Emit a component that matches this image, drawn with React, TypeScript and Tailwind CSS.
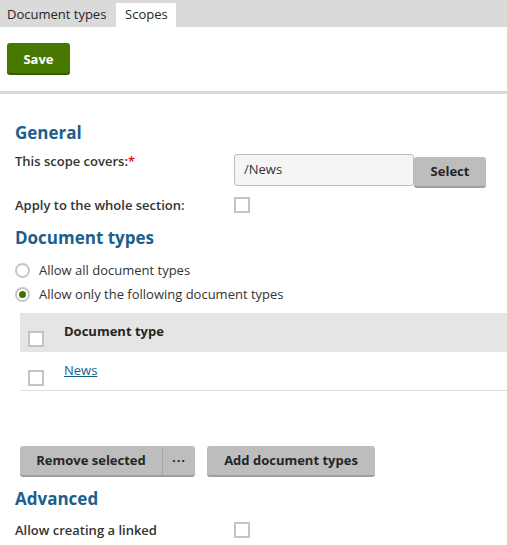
import React from 'react';

function Checkbox() {
  return <span className="block h-4 w-4 border-2 border-[#c4c4c4] bg-white" />;
}

function Radio({ checked }: { checked?: boolean }) {
  return (
    <span className="flex h-[15px] w-[15px] items-center justify-center rounded-full border-2 border-[#c6c6c6] bg-white">
      {checked && <span className="block h-[7px] w-[7px] rounded-full bg-[#3f7400]" />}
    </span>
  );
}

function GrayButton({ children, className = '' }: { children: React.ReactNode; className?: string }) {
  return (
    <button
      type="button"
      className={`h-[31px] rounded-[3px] border-b-2 border-[#9e9e9e] bg-[#bdbdbd] px-4 pt-[2px] text-[13px] font-bold text-[#262626] ${className}`}
    >
      {children}
    </button>
  );
}

export default function App() {
  return (
    <div className="h-[545px] w-[507px] overflow-hidden bg-white text-[13px] text-[#333] font-['Open_Sans',sans-serif]">
      {/* tabs */}
      <div className="flex h-[27px] items-end bg-[#d9dad9] pl-[7px]">
        <div className="flex h-6 items-center pr-[10px] text-[13px] text-[#262626]">Document types</div>
        <div className="flex h-6 w-[60px] items-center justify-center bg-white text-[13px] text-[#262626]">Scopes</div>
      </div>

      <div className="px-[7px] pt-4 pb-4">
        <button
          type="button"
          className="h-8 w-[63px] rounded-[3px] border-b-2 border-[#365c00] bg-[#487800] pt-[3px] text-[13px] font-bold text-white"
        >
          Save
        </button>
      </div>
      <div className="h-[3px] bg-[#d8d8d8]" />

      <div className="px-[15px]">
        <h2 className="mt-[26px] text-[17px] font-bold text-[#1b5f8c]">General</h2>

        <div className="mt-[8px] flex items-start">
          <div className="-mt-[2px] w-[219px] font-semibold">
            This scope covers:<span className="text-[#e00]">*</span>
          </div>
          <div className="flex items-start">
            <div className="flex h-8 w-[180px] items-center rounded-[3px] border border-[#bdbdbd] bg-[#f5f5f5] px-[9px] text-[#333]">
              /News
            </div>
            <GrayButton className="mt-[3px] w-[72px] px-0">Select</GrayButton>
          </div>
        </div>

        <div className="mt-[8px] flex items-center">
          <div className="w-[219px] font-semibold">Apply to the whole section:</div>
          <Checkbox />
        </div>

        <h2 className="mt-[10px] text-[17px] font-bold text-[#1b5f8c]">Document types</h2>

        <div className="mt-[10px] flex flex-col gap-[5px]">
          <label className="flex items-center gap-[9px]">
            <Radio />
            <span>Allow all document types</span>
          </label>
          <label className="flex items-center gap-[9px]">
            <Radio checked />
            <span>Allow only the following document types</span>
          </label>
        </div>
      </div>

      <div className="ml-5 mt-[8px]">
        <div className="flex h-[39px] items-center bg-[#e5e5e5] pl-2">
          <div className="mt-[14px]">
            <Checkbox />
          </div>
          <span className="ml-5 font-bold text-[#262626]">Document type</span>
        </div>
        <div className="flex h-[39px] items-center border-b border-[#dedede] pl-2">
          <div className="mt-[14px]">
            <Checkbox />
          </div>
          <a href="#" className="ml-5 text-[#1b5f8c] underline">News</a>
        </div>
      </div>

      <div className="ml-5 mt-[55px] flex gap-3">
        <div className="flex h-[31px] rounded-[3px] border-b-2 border-[#9e9e9e] bg-[#bdbdbd] pt-[2px] text-[13px] font-bold text-[#262626]">
          <span className="flex w-[143px] items-center justify-center border-r border-[#a8a8a8]">Remove selected</span>
          <span className="flex w-[32px] items-center justify-center tracking-[1px]">···</span>
        </div>
        <GrayButton className="w-[168px] px-0">Add document types</GrayButton>
      </div>

      <div className="px-[15px]">
        <h2 className="mt-[9px] text-[17px] font-bold text-[#1b5f8c]">Advanced</h2>
        <div className="mt-[9px] flex items-start">
          <div className="w-[219px] font-semibold leading-[21px]">
            Allow creating a linked
            <br />
            document
          </div>
          <div className="pt-[2px]">
            <Checkbox />
          </div>
        </div>
      </div>
    </div>
  );
}
